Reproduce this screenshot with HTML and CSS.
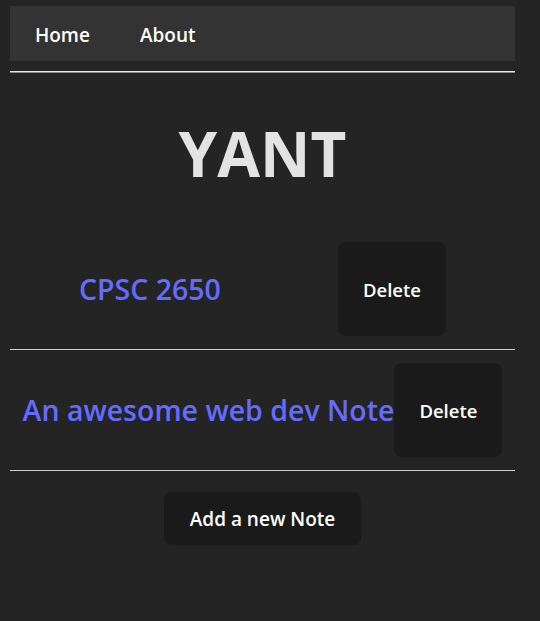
FILE: index.html
```html
<!DOCTYPE html>
<html lang="en">
<head>
<meta charset="utf-8">
<title>YANT</title>
<link rel="stylesheet" href="styles.css">
</head>
<body>
<div class="app">
  <nav class="nav">
    <a class="nav-link" href="#">Home</a>
    <a class="nav-link" href="#">About</a>
  </nav>
  <hr class="nav-rule">
  <h1 class="title">YANT</h1>
  <div class="note">
    <a class="note-title" href="#">CPSC 2650</a>
    <button class="btn btn-delete">Delete</button>
  </div>
  <hr class="note-rule">
  <div class="note">
    <a class="note-title" href="#">An awesome web dev Note</a>
    <button class="btn btn-delete">Delete</button>
  </div>
  <hr class="note-rule">
  <div class="actions">
    <button class="btn btn-add">Add a new Note</button>
  </div>
</div>
</body>
</html>
```

FILE: styles.css
```css
html, body {
  margin: 0;
  padding: 0;
  background: #242424;
  height: 100%;
}
body {
  font-family: "Open Sans", "Noto Sans", sans-serif;
  color: rgba(255, 255, 255, 0.87);
}
.app {
  width: 505px;
  margin-left: 10px;
  padding-top: 6px;
}
.nav {
  height: 55px;
  background: #333333;
  display: flex;
  align-items: center;
  gap: 50px;
  padding-left: 25px;
}
.nav-link {
  color: #ffffff;
  text-decoration: none;
  font-size: 19px;
  font-weight: 600;
  position: relative;
  top: 1px;
}
.nav-rule {
  margin: 10px 0 0 0;
  border: 0;
  border-top: 1px solid #e6e6e6;
  border-bottom: 1px solid #8a8a8a;
  height: 0;
}
.title {
  margin: 40px 0 0 0;
  text-align: center;
  font-size: 62px;
  font-weight: 700;
  line-height: 80px;
  color: #e3e3e3;
}
.note {
  display: flex;
  justify-content: center;
  align-items: center;
  padding: 13px 0;
}
.title + .note {
  margin-top: 49px;
  padding-top: 0;
}
.note-title {
  min-width: 259px;
  color: #646cff;
  text-decoration: none;
  font-size: 28.5px;
  font-weight: 600;
}
.note-rule {
  margin: 0;
  border: 0;
  border-top: 1px solid #cfcfcf;
  height: 0;
}
.btn {
  background: #1a1a1a;
  color: #ffffff;
  border: 1px solid transparent;
  border-radius: 8px;
  font-family: inherit;
  font-size: 18.5px;
  font-weight: 600;
  cursor: pointer;
}
.btn-delete {
  width: 108px;
  height: 94px;
}
.actions {
  display: flex;
  justify-content: center;
  padding-top: 21px;
}
.btn-add {
  width: 197px;
  height: 53px;
  font-size: 19px;
}
```
